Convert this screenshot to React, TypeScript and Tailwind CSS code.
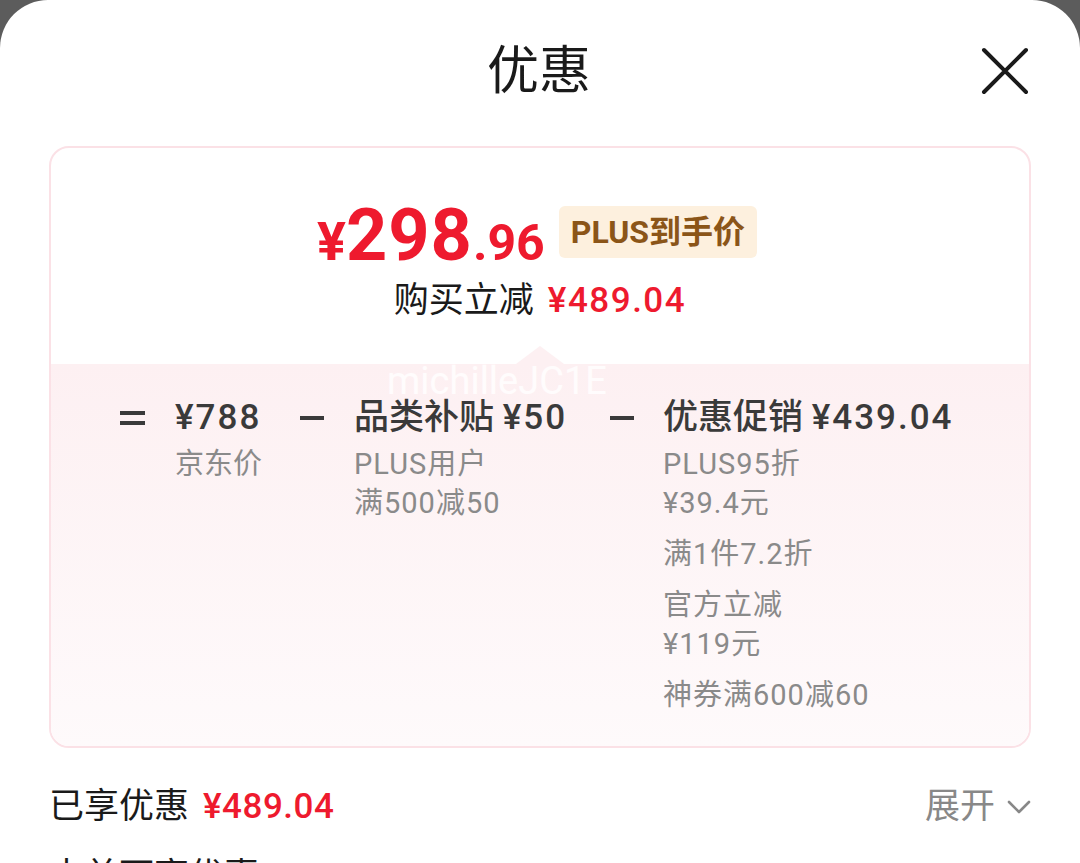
import * as React from "react";

const font = { fontFamily: '"Roboto","Noto Sans CJK SC",sans-serif' };

function CloseIcon() {
  return (
    <svg width="48" height="48" viewBox="0 0 48 48" fill="none">
      <path d="M3 3L45 45M45 3L3 45" stroke="#1a1a1a" strokeWidth="4" strokeLinecap="round" />
    </svg>
  );
}

function Chevron() {
  return (
    <svg width="24" height="14" viewBox="0 0 24 14" fill="none">
      <path d="M2 2L12 12L22 2" stroke="#888" strokeWidth="2.6" strokeLinecap="round" strokeLinejoin="round" />
    </svg>
  );
}

function Op({ sign }: { sign: "=" | "-" }) {
  return (
    <div className="flex h-[36px] items-center">
      {sign === "=" ? (
        <div className="flex w-[25px] flex-col gap-[6px]">
          <div className="h-[4px] bg-[#3a3a3a]" />
          <div className="h-[4px] bg-[#3a3a3a]" />
        </div>
      ) : (
        <div className="h-[4px] w-[24px] bg-[#3a3a3a]" />
      )}
    </div>
  );
}

export default function App() {
  return (
    <div className="h-[863px] w-[1080px] overflow-hidden bg-[#5c5c5c]" style={font}>
      <div className="h-full rounded-t-[48px] bg-white px-[49px]">
        {/* header */}
        <div className="flex h-[146px] items-start justify-between pt-[37px]">
          <div className="w-[48px]" />
          <h1 className="text-[52px] leading-[70px] font-normal text-[#1a1a1a]">优惠</h1>
          <div className="mr-[2px] mt-[10px]">
            <CloseIcon />
          </div>
        </div>

        {/* price card */}
        <div className="flex h-[602px] flex-col overflow-hidden rounded-[20px] border-2 border-[#fbe1e6]">
          <div className="flex h-[216px] flex-col items-center pt-[52px]">
            <div className="ml-[-6px] flex items-center gap-[14px]">
              <div className="flex items-baseline font-bold text-[#ee1a2e]">
                <span className="text-[54px] leading-none">¥</span>
                <span className="text-[72px] leading-none tracking-[1px]">298</span>
                <span className="text-[50px] leading-none">.96</span>
              </div>
              <div className="mt-[-8px] rounded-[6px] bg-[#fdf0de] px-[12px] py-[4px] text-[32px] leading-[44px] font-bold text-[#8b5518]">
                PLUS到手价
              </div>
            </div>
            <div className="mt-[6px] flex items-center gap-[14px] text-[35px] leading-[46px]">
              <span className="text-[#1a1a1a]">购买立减</span>
              <span className="font-medium tracking-[1.5px] text-[#ee1a2e]">¥489.04</span>
            </div>
          </div>

          <div className="relative flex-1 bg-gradient-to-b from-[#fdf0f2] to-[#fefafb]">
            <div className="absolute left-1/2 top-[-18px] h-0 w-0 -translate-x-1/2 border-x-[24px] border-b-[18px] border-x-transparent border-b-[#fdf0f2]" />

            <div className="relative flex pt-[36px] pl-[69px] text-[#3a3a3a]">
              <div className="w-[55px]">
                <Op sign="=" />
              </div>
              <div className="w-[125px]">
                <div className="text-[35px] leading-[36px] font-medium tracking-[2px]">¥788</div>
                <div className="mt-[9px] text-[29px] leading-[39px] text-[#8a8a8a]">京东价</div>
              </div>
              <div className="w-[54px]">
                <Op sign="-" />
              </div>
              <div className="w-[256px]">
                <div className="text-[35px] leading-[36px] font-medium whitespace-nowrap">
                  品类补贴 <span className="tracking-[2px]">¥50</span>
                </div>
                <div className="mt-[9px] text-[29px] leading-[39px] tracking-[1px] text-[#8a8a8a]">
                  <div>PLUS用户</div>
                  <div>满500减50</div>
                </div>
              </div>
              <div className="w-[53px]">
                <Op sign="-" />
              </div>
              <div>
                <div className="text-[35px] leading-[36px] font-medium whitespace-nowrap">
                  优惠促销 <span className="tracking-[2px]">¥439.04</span>
                </div>
                <div className="mt-[9px] flex flex-col gap-[12px] text-[29px] leading-[39px] tracking-[1px] text-[#8a8a8a]">
                  <div>
                    <div>PLUS95折</div>
                    <div>¥39.4元</div>
                  </div>
                  <div>满1件7.2折</div>
                  <div>
                    <div>官方立减</div>
                    <div>¥119元</div>
                  </div>
                  <div>神券满600减60</div>
                </div>
              </div>
            </div>

            {/* watermark overlay */}
            <div className="absolute left-[336px] top-0 text-[38px] leading-[34px] text-white/80">michilleJC1E</div>
          </div>
        </div>

        {/* enjoyed discount */}
        <div className="mt-[36px] flex items-center justify-between">
          <div className="flex items-center gap-[14px] text-[35px] leading-[46px]">
            <span className="text-[#1a1a1a]">已享优惠</span>
            <span className="font-medium tracking-[0.5px] text-[#ee1a2e]">¥489.04</span>
          </div>
          <div className="flex items-center gap-[12px] text-[35px] leading-[46px] text-[#888]">
            <span>展开</span>
            <Chevron />
          </div>
        </div>
        <div className="mt-[24px] text-[35px] leading-[46px] text-[#1a1a1a]">本单可享优惠</div>
      </div>
    </div>
  );
}
